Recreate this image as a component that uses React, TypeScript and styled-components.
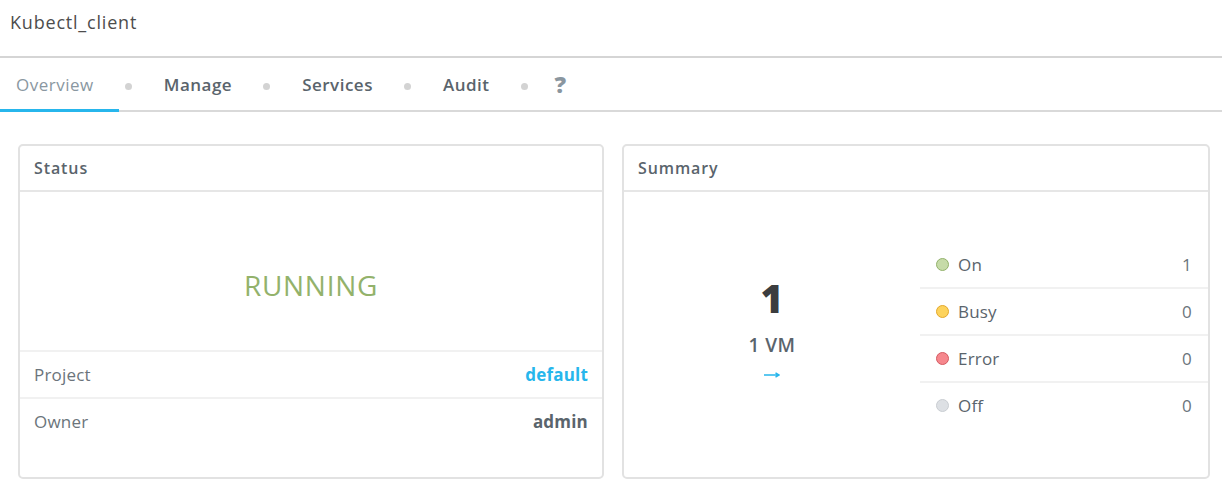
import React from 'react';
import styled, { createGlobalStyle } from 'styled-components';

const GlobalStyle = createGlobalStyle`
  body {
    margin: 0;
    background: #ffffff;
    font-family: 'Open Sans', 'Liberation Sans', sans-serif;
    color: #59636b;
  }
`;

const Header = styled.header`
  height: 58px;
  padding: 10px 0 0 10px;
  box-sizing: border-box;
  border-bottom: 2px solid #d5d5d5;
  font-size: 18px;
  letter-spacing: 0.8px;
  color: #4d4d4d;
`;

const TabBar = styled.nav`
  display: flex;
  align-items: center;
  height: 52px;
  border-bottom: 2px solid #d9d9d9;
`;

const Tab = styled.div<{ $active?: boolean }>`
  position: relative;
  display: flex;
  align-items: center;
  height: 100%;
  padding: 0 25px 0 16px;
  font-size: 17px;
  letter-spacing: 0.5px;
  font-weight: ${(p) => (p.$active ? 400 : 600)};
  color: ${(p) => (p.$active ? '#8a97a1' : '#5a646c')};

  &::after {
    content: '';
    display: ${(p) => (p.$active ? 'block' : 'none')};
    position: absolute;
    left: 0;
    right: 0;
    bottom: -2px;
    height: 3px;
    background: #27b6ec;
  }
`;

const HelpTab = styled(Tab)`
  padding-left: 11px;
  font-size: 23px;
  font-weight: 800;
  color: #8a969f;
`;

const Dot = styled.span`
  width: 7px;
  height: 7px;
  margin: 4px 16px 0 6px;
  border-radius: 50%;
  background: #d3d3d3;
`;

const Content = styled.main`
  display: grid;
  grid-template-columns: 586fr 588fr;
  gap: 18px;
  padding: 32px 12px 0 18px;
`;

const Card = styled.section`
  display: flex;
  flex-direction: column;
  height: 335px;
  border: 2px solid #e2e2e2;
  border-radius: 5px;
  box-sizing: border-box;
  overflow: hidden;
`;

const CardHeader = styled.div`
  display: flex;
  align-items: center;
  height: 44px;
  flex: none;
  padding: 0 14px;
  border-bottom: 2px solid #e6e6e6;
  font-size: 16px;
  letter-spacing: 0.9px;
  font-weight: 600;
  color: #5a646c;
`;

const StateBox = styled.div`
  display: flex;
  align-items: center;
  justify-content: center;
  height: 158px;
  flex: none;
  box-sizing: border-box;
  padding-top: 28px;
  font-size: 28px;
  font-weight: 500;
  letter-spacing: 0.7px;
  color: #93b26b;
`;

const InfoRow = styled.div`
  display: flex;
  align-items: center;
  justify-content: space-between;
  height: 45px;
  padding: 0 14px;
  border-top: 2px solid #f1f1f1;
  font-size: 17px;
  letter-spacing: 0.2px;
`;

const InfoLabel = styled.span`
  color: #6b747b;
`;

const InfoValue = styled.span<{ $link?: boolean }>`
  font-weight: 700;
  color: ${(p) => (p.$link ? '#27b6ec' : '#5a646c')};
`;

const SummaryBody = styled.div`
  flex: 1;
  display: grid;
  grid-template-columns: 296px 1fr;
  align-items: center;
`;

const Total = styled.div`
  display: flex;
  flex-direction: column;
  align-items: center;
  margin-top: -21px;
`;

const TotalNumber = styled.div`
  font-size: 39px;
  font-weight: 800;
  line-height: 54px;
  color: #3b3d3f;
`;

const TotalLabel = styled.div`
  margin-top: 8px;
  font-size: 19px;
  font-weight: 600;
  letter-spacing: 0.5px;
  line-height: 24px;
  color: #5a646c;
`;

const Arrow = styled.svg`
  display: block;
  margin-top: 15px;
`;

const StateList = styled.ul`
  margin: 0;
  padding: 0;
  list-style: none;
`;

const StateRow = styled.li`
  display: flex;
  align-items: center;
  height: 45px;
  padding: 0 16px;
  font-size: 17px;
  letter-spacing: 0.2px;
  color: #5a646c;

  & + & {
    border-top: 2px solid #f1f1f1;
  }
`;

const StateDot = styled.span<{ $fill: string; $ring: string }>`
  width: 11px;
  height: 11px;
  margin-right: 9px;
  border-radius: 50%;
  border: 1.5px solid ${(p) => p.$ring};
  background: ${(p) => p.$fill};
`;

const StateName = styled.span`
  flex: 1;
`;

const StateCount = styled.span`
  color: #6b747b;
`;

const states = [
  { name: 'On', count: 1, fill: '#c6dba8', ring: '#93b26b' },
  { name: 'Busy', count: 0, fill: '#fdd35c', ring: '#e3a82c' },
  { name: 'Error', count: 0, fill: '#f6878d', ring: '#d45a61' },
  { name: 'Off', count: 0, fill: '#dde0e4', ring: '#c9cdd2' },
];

const tabs = ['Overview', 'Manage', 'Services', 'Audit'];

export default function App() {
  return (
    <>
      <GlobalStyle />
      <Header>Kubectl_client</Header>
      <TabBar>
        {tabs.map((t, i) => (
          <React.Fragment key={t}>
            <Tab $active={i === 0}>{t}</Tab>
            <Dot />
          </React.Fragment>
        ))}
        <HelpTab>?</HelpTab>
      </TabBar>
      <Content>
        <Card>
          <CardHeader>Status</CardHeader>
          <StateBox>RUNNING</StateBox>
          <InfoRow>
            <InfoLabel>Project</InfoLabel>
            <InfoValue $link>default</InfoValue>
          </InfoRow>
          <InfoRow>
            <InfoLabel>Owner</InfoLabel>
            <InfoValue>admin</InfoValue>
          </InfoRow>
        </Card>
        <Card>
          <CardHeader>Summary</CardHeader>
          <SummaryBody>
            <Total>
              <TotalNumber>1</TotalNumber>
              <TotalLabel>1 VM</TotalLabel>
              <Arrow width="16" height="6" viewBox="0 0 16 6">
                <path d="M0 3h14M11.5 0.8L15 3l-3.5 2.2" fill="none" stroke="#27b6ec" strokeWidth="1.4" />
              </Arrow>
            </Total>
            <StateList>
              {states.map((s) => (
                <StateRow key={s.name}>
                  <StateDot $fill={s.fill} $ring={s.ring} />
                  <StateName>{s.name}</StateName>
                  <StateCount>{s.count}</StateCount>
                </StateRow>
              ))}
            </StateList>
          </SummaryBody>
        </Card>
      </Content>
    </>
  );
}
